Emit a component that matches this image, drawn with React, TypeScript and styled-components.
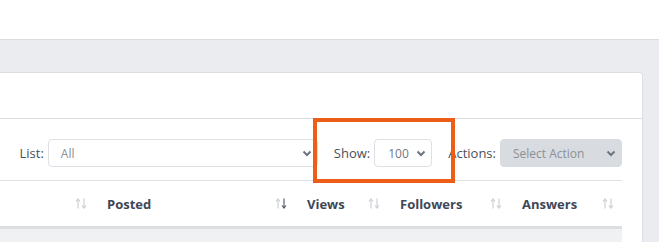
import React from "react";
import styled, { createGlobalStyle } from "styled-components";

const GlobalStyle = createGlobalStyle`
    body {
        margin: 0;
        background: #ebecef;
        font-family: "Open Sans", "Liberation Sans", sans-serif;
        overflow: hidden;
    }
`;

const columns = [
    { label: "", width: 95 },
    { label: "Posted", width: 200, sort: "desc" },
    { label: "Views", width: 93 },
    { label: "Followers", width: 122 },
    { label: "Answers", width: 112 },
];

// kolumnens pilar, aktiv pil blir mörk
const SortIcon = ({ sort }: { sort?: string }) => (
    <svg width="12" height="11" viewBox="0 0 12 11" fill="none">
        <g stroke={sort === "asc" ? "#4a5262" : "#c9cdd3"} strokeWidth="1.1">
            <path d="M3 10.5V1" />
            <path d="M1 3.5L3 1l2 2.5" />
        </g>
        <g stroke={sort === "desc" ? "#4a5262" : "#c9cdd3"} strokeWidth="1.1">
            <path d="M9 0.5V10" />
            <path d="M7 7.5L9 10l2-2.5" />
        </g>
    </svg>
);

const Chevron = () => (
    <svg width="10" height="7" viewBox="0 0 10 7" fill="none">
        <path d="M1.5 1.5L5 5l3.5-3.5" stroke="#6f7580" strokeWidth="2" />
    </svg>
);

const App: React.FC = () => {
    return (
        <>
            <GlobalStyle />
            <TopBar />
            <Main>
                <Card>
                    <CardHeader />
                    <CardBody>
                        <Toolbar>
                            <Field>
                                <Label>List:</Label>
                                <Select $width={270}>
                                    <span>All</span>
                                    <Chevron />
                                </Select>
                            </Field>
                            <Field>
                                <Label>Show:</Label>
                                <Select $width={58}>
                                    <SelectValue $dark>100</SelectValue>
                                    <Chevron />
                                </Select>
                            </Field>
                            <Field>
                                <Label>Actions:</Label>
                                <Select $width={122} $disabled>
                                    <span>Select Action</span>
                                    <Chevron />
                                </Select>
                            </Field>
                        </Toolbar>
                        <HeadRow>
                            {columns.map((col, i) => (
                                <HeadCell key={i} $width={col.width}>
                                    <span>{col.label}</span>
                                    <SortIcon sort={col.sort} />
                                </HeadCell>
                            ))}
                        </HeadRow>
                        <StripeRow />
                    </CardBody>
                    <Highlight />
                </Card>
            </Main>
        </>
    );
};

// CSS

const TopBar = styled.div`
    height: 39px;
    background: #ffffff;
    border-bottom: 1px solid #d9dbde;
`;

const Main = styled.div`
    padding: 32px 16px 0 0;
`;

const Card = styled.div`
    position: relative;
    display: flex;
    flex-direction: column;
    height: 169px;
    overflow: hidden;
    background: #ffffff;
    border-top: 1px solid #dcdee1;
    border-right: 1px solid #dcdee1;
    border-radius: 0 4px 0 0;
`;

const CardHeader = styled.div`
    flex: none;
    height: 45px;
    border-bottom: 1px solid #dcdee1;
`;

const CardBody = styled.div`
    flex: 1;
    display: flex;
    flex-direction: column;
    padding-right: 20px;
`;

const Toolbar = styled.div`
    display: flex;
    justify-content: flex-end;
    align-items: center;
    gap: 16px;
    padding: 20px 0 13px;
`;

const Field = styled.div`
    display: flex;
    align-items: center;
    gap: 4px;
`;

const Label = styled.span`
    font-size: 13px;
    color: #4b5059;
`;

const Select = styled.div<{ $width: number; $disabled?: boolean }>`
    box-sizing: border-box;
    width: ${(p) => p.$width}px;
    height: 28px;
    display: flex;
    align-items: center;
    justify-content: space-between;
    padding: 0 5px 0 12px;
    border: 1px solid ${(p) => (p.$disabled ? "#d8dbdf" : "#dde0e4")};
    border-radius: 4px;
    background: ${(p) => (p.$disabled ? "#d8dbdf" : "#ffffff")};
    font-size: 12px;
    color: #8b9099;
`;

const SelectValue = styled.span<{ $dark?: boolean }>`
    color: ${(p) => (p.$dark ? "#737983" : "#8b9099")};
    padding-left: 1px;
`;

const HeadRow = styled.div`
    display: flex;
    height: 45px;
    border-top: 1px solid #dfe1e4;
    border-bottom: 3px solid #dcdee2;
`;

const HeadCell = styled.div<{ $width: number }>`
    box-sizing: border-box;
    width: ${(p) => p.$width}px;
    display: flex;
    align-items: center;
    justify-content: space-between;
    padding: 0 8px 0 12px;
    font-size: 13px;
    font-weight: 700;
    color: #3e4758;
`;

const StripeRow = styled.div`
    flex: 1;
    background: #f0f1f3;
`;

const Highlight = styled.div`
    position: absolute;
    left: 313px;
    top: 45px;
    width: 142px;
    height: 65px;
    box-sizing: border-box;
    border: 4px solid #ec5d17;
`;

export default App;
